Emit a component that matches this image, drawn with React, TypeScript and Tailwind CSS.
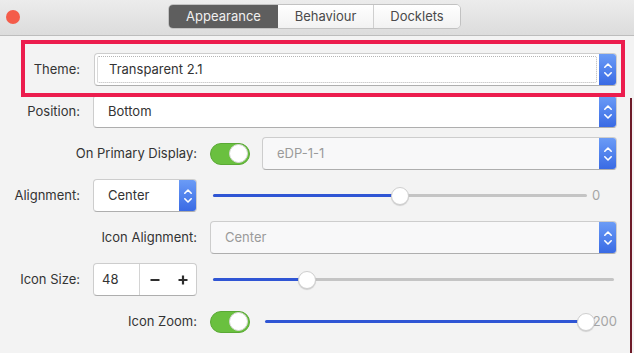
import React from "react";

const font = { fontFamily: "Inter, 'Noto Sans', sans-serif" };

function Spinner() {
  return (
    <div className="w-[17px] shrink-0 self-stretch bg-linear-to-b from-[#6b9bf6] to-[#3a6ae4] flex items-center justify-center">
      <svg width="10" height="20" viewBox="0 0 10 20">
        <path d="M1.8 7.2 L5 4 L8.2 7.2" stroke="white" strokeWidth="1.6" fill="none" strokeLinecap="round" strokeLinejoin="round" />
        <path d="M1.8 12.8 L5 16 L8.2 12.8" stroke="white" strokeWidth="1.6" fill="none" strokeLinecap="round" strokeLinejoin="round" />
      </svg>
    </div>
  );
}

function Combo({ text, disabled, focused, className }: { text: string; disabled?: boolean; focused?: boolean; className?: string }) {
  return (
    <div
      className={`h-[33px] flex overflow-hidden rounded-[4px] border border-[#cdcdcd] border-b-[#aeaeae] ${disabled ? "bg-[#f8f8f9]" : "bg-white"} ${className ?? ""}`}
    >
      <div className="flex-1 flex p-[2px]">
        <div
          className={`flex-1 flex items-center pl-[11px] text-[13px] rounded-[2px] border border-dotted ${focused ? "border-[#b5b5b5]" : "border-transparent"} ${disabled ? "text-[#9a9a9a]" : "text-[#333333]"}`}
        >
          {text}
        </div>
      </div>
      <Spinner />
    </div>
  );
}

function Toggle() {
  return (
    <div className="w-[40px] h-[22px] rounded-full bg-[#6ac03f] border border-[#5aa935] flex items-center justify-end pr-[1px] shrink-0">
      <div className="w-[19px] h-[19px] rounded-full bg-white border border-[#d8d8d8]" />
    </div>
  );
}

function Thumb() {
  return (
    <div className="absolute top-1/2 -translate-y-1/2 -translate-x-1/2 w-[18px] h-[18px] rounded-full bg-white border border-[#cfcfcf] shadow-[0_1px_1px_rgba(0,0,0,0.15)]" />
  );
}

export default function App() {
  return (
    <div className="relative w-[634px] h-[353px] overflow-hidden bg-[#f3f3f3] text-[13px] text-[#333333]" style={font}>
      {/* title bar */}
      <div className="h-[36px] bg-linear-to-b from-[#ececec] to-[#dcdcdc] border-b border-[#bdbdbd] flex items-center relative">
        <div className="absolute left-[6px] top-[10px] w-[14px] h-[14px] rounded-full bg-[#f45c4a]" />
        <div className="flex-1 flex justify-center pr-[5px] pb-[2px]">
          <div className="flex h-[25px] rounded-[5px] border border-[#c2c2c2] overflow-hidden text-[13px]">
            <div className="w-[109px] flex items-center justify-center bg-[#5e5e5e] text-[#f0f0f0]">Appearance</div>
            <div className="w-[96px] flex items-center justify-center bg-linear-to-b from-white to-[#f2f2f2] text-[#4a4a4a] border-r border-[#cfcfcf]">Behaviour</div>
            <div className="w-[86px] flex items-center justify-center bg-linear-to-b from-white to-[#f2f2f2] text-[#4a4a4a]">Docklets</div>
          </div>
        </div>
      </div>

      {/* content */}
      <div className="flex flex-col gap-[9px] pt-[17px] pr-[17px]">
        {/* Theme */}
        <div className="flex items-center h-[33px]">
          <div className="w-[80px] text-right shrink-0">Theme:</div>
          <Combo text="Transparent 2.1" focused className="ml-[14px] flex-1" />
        </div>
        {/* Position */}
        <div className="flex items-center h-[33px]">
          <div className="w-[80px] text-right shrink-0">Position:</div>
          <Combo text="Bottom" className="ml-[13px] flex-1" />
        </div>
        {/* Primary display */}
        <div className="flex items-center h-[33px]">
          <div className="w-[197px] text-right shrink-0">On Primary Display:</div>
          <div className="ml-[13px]"><Toggle /></div>
          <Combo text="eDP-1-1" disabled className="ml-[12px] flex-1" />
        </div>
        {/* Alignment */}
        <div className="flex items-center h-[33px]">
          <div className="w-[80px] text-right shrink-0">Alignment:</div>
          <Combo text="Center" className="ml-[13px] w-[104px] shrink-0" />
          <div className="ml-[16px] flex-1 flex items-center">
            <div className="relative flex-1 h-[3px] bg-[#c4c4c4] rounded-full">
              <div className="absolute left-0 top-0 h-[3px] w-1/2 bg-[#2f55d4] rounded-full" />
              <div className="absolute left-1/2 top-1/2"><Thumb /></div>
            </div>
            <div className="w-[30px] pl-[5px] text-[#a5a5a5]">0</div>
          </div>
        </div>
        {/* Icon Alignment */}
        <div className="flex items-center h-[33px]">
          <div className="w-[197px] text-right shrink-0">Icon Alignment:</div>
          <Combo text="Center" disabled className="ml-[13px] flex-1" />
        </div>
        {/* Icon Size */}
        <div className="flex items-center h-[33px]">
          <div className="w-[80px] text-right shrink-0">Icon Size:</div>
          <div className="ml-[13px] w-[104px] h-[33px] shrink-0 flex rounded-[4px] border border-[#cdcdcd] border-b-[#aeaeae] bg-white overflow-hidden">
            <div className="w-[46px] border-r border-[#d4d4d4] flex items-center pl-[8px]">48</div>
            <div className="flex-1 flex items-center justify-between pl-[9px] pr-[7px]">
              <svg width="12" height="12" viewBox="0 0 12 12"><path d="M1.5 6 H10.5" stroke="#2e2e2e" strokeWidth="2.2" /></svg>
              <svg width="12" height="12" viewBox="0 0 12 12"><path d="M1.5 6 H10.5 M6 1.5 V10.5" stroke="#2e2e2e" strokeWidth="2.2" /></svg>
            </div>
          </div>
          <div className="ml-[16px] mr-[3px] flex-1 relative h-[3px] bg-[#c4c4c4] rounded-full">
            <div className="absolute left-0 top-0 h-[3px] w-[94px] bg-[#2f55d4] rounded-full" />
            <div className="absolute left-[94px] top-1/2"><Thumb /></div>
          </div>
        </div>
        {/* Icon Zoom */}
        <div className="flex items-center h-[33px]">
          <div className="w-[197px] text-right shrink-0">Icon Zoom:</div>
          <div className="ml-[13px]"><Toggle /></div>
          <div className="ml-[15px] flex-1 flex items-center">
            <div className="relative flex-1 h-[3px] bg-[#2f55d4] rounded-full">
              <div className="absolute left-full top-1/2"><Thumb /></div>
            </div>
            <div className="pl-[7px] text-[#a5a5a5]">200</div>
          </div>
        </div>
      </div>

      {/* annotation box */}
      <div className="absolute left-[21px] top-[40px] w-[604px] h-[57px] border-[4px] border-[#ec1d4e] pointer-events-none" />
      {/* window edge */}
      <div className="absolute left-[630px] top-[98px] bottom-0 w-[2px] bg-[#6e1b29]" />
    </div>
  );
}
